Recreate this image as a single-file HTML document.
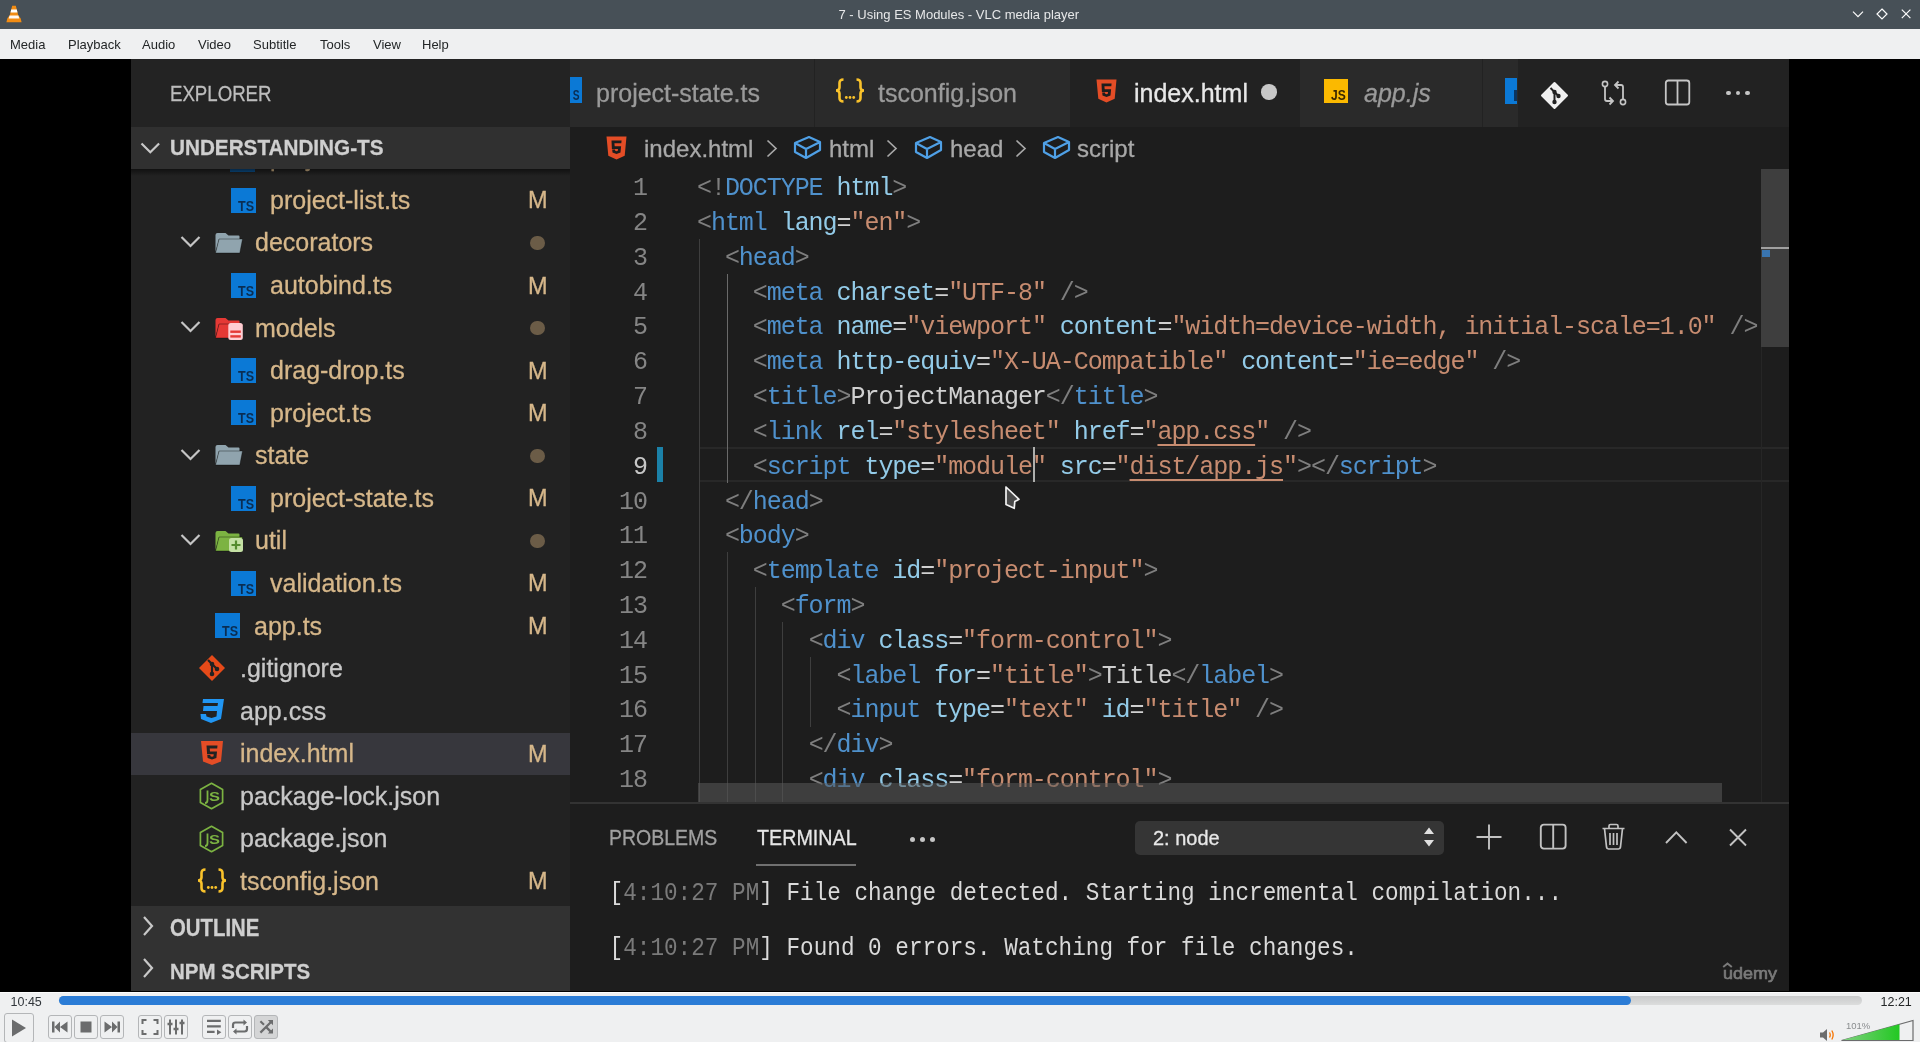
<!DOCTYPE html><html><head><meta charset="utf-8"><style>
html,body{margin:0;padding:0;width:1920px;height:1042px;overflow:hidden;background:#000}
.t{position:absolute;white-space:pre}
#vid .t[style*="Liberation Sans"]{-webkit-text-stroke:0.3px currentColor}
.r{position:absolute}
#root{position:absolute;left:0;top:0;width:1920px;height:1042px;will-change:transform}
</style></head><body><div id="root"><div class="r" style="left:0px;top:0px;width:1920px;height:29px;background:#475057;"></div>
<svg class="r" style="left:5px;top:5px" width="18" height="18" viewBox="0 0 18 18"><path d="M7.2 0.8 L10.8 0.8 L13.2 10 L15.6 13.2 L16.6 17.2 L1.4 17.2 L2.4 13.2 L4.8 10 Z" fill="#f28c13"/>
<path d="M6.2 4.6 L11.8 4.6 L12.5 7.6 L5.5 7.6 Z" fill="#fff"/>
<path d="M4.6 10.4 L13.4 10.4 L14.3 13.4 L3.7 13.4 Z" fill="#fff" opacity="0.95"/></svg>
<div class="t" style="left:838.50px;top:6.29px;font-size:13px;line-height:18px;color:#e6e7e8;font-family:'Liberation Sans', sans-serif;">7 - Using ES Modules - VLC media player</div>
<svg class="r" style="left:1850px;top:6px" width="16" height="16" viewBox="0 0 16 16"><path d="M3 5.6 L8 10.6 L13 5.6" stroke="#fcfcfc" stroke-width="1.2" fill="none"/></svg>
<svg class="r" style="left:1874px;top:6px" width="16" height="16" viewBox="0 0 16 16"><path d="M8 3 L13 8 L8 13 L3 8 Z" stroke="#fcfcfc" stroke-width="1.2" fill="none"/></svg>
<svg class="r" style="left:1898px;top:6px" width="16" height="16" viewBox="0 0 16 16"><path d="M3.8 3.6 L12.4 12.2 M12.4 3.6 L3.8 12.2" stroke="#fcfcfc" stroke-width="1.2" fill="none"/></svg>
<div class="r" style="left:0px;top:29px;width:1920px;height:30px;background:#eff0f1;"></div>
<div class="t" style="left:10.00px;top:36.09px;font-size:13px;line-height:18px;color:#232627;font-family:'Liberation Sans', sans-serif;">Media</div>
<div class="t" style="left:68.00px;top:36.09px;font-size:13px;line-height:18px;color:#232627;font-family:'Liberation Sans', sans-serif;">Playback</div>
<div class="t" style="left:142.00px;top:36.09px;font-size:13px;line-height:18px;color:#232627;font-family:'Liberation Sans', sans-serif;">Audio</div>
<div class="t" style="left:198.00px;top:36.09px;font-size:13px;line-height:18px;color:#232627;font-family:'Liberation Sans', sans-serif;">Video</div>
<div class="t" style="left:253.00px;top:36.09px;font-size:13px;line-height:18px;color:#232627;font-family:'Liberation Sans', sans-serif;">Subtitle</div>
<div class="t" style="left:320.00px;top:36.09px;font-size:13px;line-height:18px;color:#232627;font-family:'Liberation Sans', sans-serif;">Tools</div>
<div class="t" style="left:373.00px;top:36.09px;font-size:13px;line-height:18px;color:#232627;font-family:'Liberation Sans', sans-serif;">View</div>
<div class="t" style="left:422.00px;top:36.09px;font-size:13px;line-height:18px;color:#232627;font-family:'Liberation Sans', sans-serif;">Help</div>
<div class="r" style="left:0px;top:59px;width:1920px;height:933px;background:#000;"></div>
<div id="vid" style="position:absolute;left:0;top:0;width:1920px;height:1042px">
<div class="r" style="left:131px;top:59px;width:439px;height:932px;background:#222222;"></div>
<div class="r" style="left:131px;top:59px;width:439px;height:68px;background:#232323;"></div>
<div class="t" style="left:170.30px;top:77.61px;font-size:21.88px;line-height:31px;color:#bdbdbd;font-family:'Liberation Sans', sans-serif;;transform:scaleX(0.8519);transform-origin:0 0">EXPLORER</div>
<div class="r" style="left:230px;top:169px;width:25px;height:3px;background:#0b4f8a;"></div>
<div class="t" style="left:270.00px;top:140.37px;font-size:25px;line-height:35px;color:#d6b78a;font-family:'Liberation Sans', sans-serif;">project-item.ts</div>
<div class="r" style="left:131px;top:127px;width:439px;height:42px;background:#303030;"></div>
<svg class="r" style="left:139px;top:140px" width="23" height="16" viewBox="0 0 23 16"><path d="M2.5 3.5 L11.3 12.3 L20.1 3.5" stroke="#c8c8c8" stroke-width="2.2" fill="none"/></svg>
<div class="t" style="left:170.30px;top:133.46px;font-size:21.74px;line-height:30px;color:#cfcfcf;font-family:'Liberation Sans', sans-serif;font-weight:bold;;transform:scaleX(0.9523);transform-origin:0 0">UNDERSTANDING-TS</div>
<div class="r" style="left:131px;top:169px;width:439px;height:7px;background:linear-gradient(rgba(0,0,0,0.5),rgba(0,0,0,0))"></div>
<div class="r" style="left:131px;top:733px;width:439px;height:42px;background:#37373d;"></div>
<svg class="r" style="left:230.5px;top:188px" width="25" height="25" viewBox="0 0 25 25"><rect x="0" y="0" width="25" height="25" fill="#0b79d6"/><text x="7" y="22.6" textLength="16" lengthAdjust="spacingAndGlyphs" font-family="Liberation Sans" font-weight="bold" font-size="14" fill="#0a2d52">TS</text></svg>
<div class="t" style="left:270.00px;top:182.93px;font-size:25px;line-height:35px;color:#d6b78a;font-family:'Liberation Sans', sans-serif;">project-list.ts</div>
<div class="t" style="left:528.00px;top:184.45px;font-size:23.5px;line-height:33px;color:#d6b78a;font-family:'Liberation Sans', sans-serif;">M</div>
<svg class="r" style="left:180px;top:234px" width="22" height="16" viewBox="0 0 22 16"><path d="M1.5 3 L10.5 12 L19.5 3" stroke="#c5c5c5" stroke-width="2.2" fill="none"/></svg>
<svg class="r" style="left:214.5px;top:232px" width="29" height="24" viewBox="0 0 29 24"><path d="M0.5 3 Q0.5 1 2.5 1 H10.5 L13.5 3.5 H23.5 Q24.5 3.5 24.5 4.5 V7 H4 L0.5 20 Z" fill="#90a4ae"/><path d="M4 7 H27.5 L24.8 21 H0.5 Z" fill="#90a4ae" stroke="rgba(0,0,0,0.45)" stroke-width="0.8"/></svg>
<div class="t" style="left:255.00px;top:225.49px;font-size:25px;line-height:35px;color:#d6b78a;font-family:'Liberation Sans', sans-serif;">decorators</div>
<div class="r" style="left:530px;top:235.7px;width:14.5px;height:14.5px;border-radius:50%;background:#6b5c47"></div>
<svg class="r" style="left:230.5px;top:273px" width="25" height="25" viewBox="0 0 25 25"><rect x="0" y="0" width="25" height="25" fill="#0b79d6"/><text x="7" y="22.6" textLength="16" lengthAdjust="spacingAndGlyphs" font-family="Liberation Sans" font-weight="bold" font-size="14" fill="#0a2d52">TS</text></svg>
<div class="t" style="left:270.00px;top:268.05px;font-size:25px;line-height:35px;color:#d6b78a;font-family:'Liberation Sans', sans-serif;">autobind.ts</div>
<div class="t" style="left:528.00px;top:269.57px;font-size:23.5px;line-height:33px;color:#d6b78a;font-family:'Liberation Sans', sans-serif;">M</div>
<svg class="r" style="left:180px;top:319px" width="22" height="16" viewBox="0 0 22 16"><path d="M1.5 3 L10.5 12 L19.5 3" stroke="#c5c5c5" stroke-width="2.2" fill="none"/></svg>
<svg class="r" style="left:214.5px;top:317px" width="29" height="24" viewBox="0 0 29 24"><path d="M0.5 3 Q0.5 1 2.5 1 H10.5 L13.5 3.5 H23.5 Q24.5 3.5 24.5 4.5 V7 H4 L0.5 20 Z" fill="#e53935"/><path d="M4 7 H27.5 L24.8 21 H0.5 Z" fill="#e53935" stroke="rgba(0,0,0,0.45)" stroke-width="0.8"/><rect x="13.3" y="6" width="14.5" height="17" rx="2.5" fill="#ffcdd2"/><rect x="15.3" y="13.5" width="10.5" height="2.4" fill="#e53935"/><rect x="15.3" y="18.2" width="10.5" height="2.4" fill="#e53935"/></svg>
<div class="t" style="left:255.00px;top:310.61px;font-size:25px;line-height:35px;color:#d6b78a;font-family:'Liberation Sans', sans-serif;">models</div>
<div class="r" style="left:530px;top:320.8px;width:14.5px;height:14.5px;border-radius:50%;background:#6b5c47"></div>
<svg class="r" style="left:230.5px;top:358px" width="25" height="25" viewBox="0 0 25 25"><rect x="0" y="0" width="25" height="25" fill="#0b79d6"/><text x="7" y="22.6" textLength="16" lengthAdjust="spacingAndGlyphs" font-family="Liberation Sans" font-weight="bold" font-size="14" fill="#0a2d52">TS</text></svg>
<div class="t" style="left:270.00px;top:353.17px;font-size:25px;line-height:35px;color:#d6b78a;font-family:'Liberation Sans', sans-serif;">drag-drop.ts</div>
<div class="t" style="left:528.00px;top:354.69px;font-size:23.5px;line-height:33px;color:#d6b78a;font-family:'Liberation Sans', sans-serif;">M</div>
<svg class="r" style="left:230.5px;top:400px" width="25" height="25" viewBox="0 0 25 25"><rect x="0" y="0" width="25" height="25" fill="#0b79d6"/><text x="7" y="22.6" textLength="16" lengthAdjust="spacingAndGlyphs" font-family="Liberation Sans" font-weight="bold" font-size="14" fill="#0a2d52">TS</text></svg>
<div class="t" style="left:270.00px;top:395.73px;font-size:25px;line-height:35px;color:#d6b78a;font-family:'Liberation Sans', sans-serif;">project.ts</div>
<div class="t" style="left:528.00px;top:397.25px;font-size:23.5px;line-height:33px;color:#d6b78a;font-family:'Liberation Sans', sans-serif;">M</div>
<svg class="r" style="left:180px;top:447px" width="22" height="16" viewBox="0 0 22 16"><path d="M1.5 3 L10.5 12 L19.5 3" stroke="#c5c5c5" stroke-width="2.2" fill="none"/></svg>
<svg class="r" style="left:214.5px;top:444px" width="29" height="24" viewBox="0 0 29 24"><path d="M0.5 3 Q0.5 1 2.5 1 H10.5 L13.5 3.5 H23.5 Q24.5 3.5 24.5 4.5 V7 H4 L0.5 20 Z" fill="#90a4ae"/><path d="M4 7 H27.5 L24.8 21 H0.5 Z" fill="#90a4ae" stroke="rgba(0,0,0,0.45)" stroke-width="0.8"/></svg>
<div class="t" style="left:255.00px;top:438.29px;font-size:25px;line-height:35px;color:#d6b78a;font-family:'Liberation Sans', sans-serif;">state</div>
<div class="r" style="left:530px;top:448.5px;width:14.5px;height:14.5px;border-radius:50%;background:#6b5c47"></div>
<svg class="r" style="left:230.5px;top:486px" width="25" height="25" viewBox="0 0 25 25"><rect x="0" y="0" width="25" height="25" fill="#0b79d6"/><text x="7" y="22.6" textLength="16" lengthAdjust="spacingAndGlyphs" font-family="Liberation Sans" font-weight="bold" font-size="14" fill="#0a2d52">TS</text></svg>
<div class="t" style="left:270.00px;top:480.85px;font-size:25px;line-height:35px;color:#d6b78a;font-family:'Liberation Sans', sans-serif;">project-state.ts</div>
<div class="t" style="left:528.00px;top:482.37px;font-size:23.5px;line-height:33px;color:#d6b78a;font-family:'Liberation Sans', sans-serif;">M</div>
<svg class="r" style="left:180px;top:532px" width="22" height="16" viewBox="0 0 22 16"><path d="M1.5 3 L10.5 12 L19.5 3" stroke="#c5c5c5" stroke-width="2.2" fill="none"/></svg>
<svg class="r" style="left:214.5px;top:530px" width="29" height="24" viewBox="0 0 29 24"><path d="M0.5 3 Q0.5 1 2.5 1 H10.5 L13.5 3.5 H23.5 Q24.5 3.5 24.5 4.5 V7 H4 L0.5 20 Z" fill="#7cb342"/><path d="M4 7 H27.5 L24.8 21 H0.5 Z" fill="#7cb342" stroke="rgba(0,0,0,0.45)" stroke-width="0.8"/><rect x="14" y="8" width="14" height="14" rx="2.5" fill="#c5e1a5"/><path d="M21 10.5 V19.5 M16.5 15 H25.5" stroke="#558b2f" stroke-width="2.2"/></svg>
<div class="t" style="left:255.00px;top:523.41px;font-size:25px;line-height:35px;color:#d6b78a;font-family:'Liberation Sans', sans-serif;">util</div>
<div class="r" style="left:530px;top:533.6px;width:14.5px;height:14.5px;border-radius:50%;background:#6b5c47"></div>
<svg class="r" style="left:230.5px;top:571px" width="25" height="25" viewBox="0 0 25 25"><rect x="0" y="0" width="25" height="25" fill="#0b79d6"/><text x="7" y="22.6" textLength="16" lengthAdjust="spacingAndGlyphs" font-family="Liberation Sans" font-weight="bold" font-size="14" fill="#0a2d52">TS</text></svg>
<div class="t" style="left:270.00px;top:565.97px;font-size:25px;line-height:35px;color:#d6b78a;font-family:'Liberation Sans', sans-serif;">validation.ts</div>
<div class="t" style="left:528.00px;top:567.49px;font-size:23.5px;line-height:33px;color:#d6b78a;font-family:'Liberation Sans', sans-serif;">M</div>
<svg class="r" style="left:214.5px;top:613px" width="25" height="25" viewBox="0 0 25 25"><rect x="0" y="0" width="25" height="25" fill="#0b79d6"/><text x="7" y="22.6" textLength="16" lengthAdjust="spacingAndGlyphs" font-family="Liberation Sans" font-weight="bold" font-size="14" fill="#0a2d52">TS</text></svg>
<div class="t" style="left:254.00px;top:608.53px;font-size:25px;line-height:35px;color:#d6b78a;font-family:'Liberation Sans', sans-serif;">app.ts</div>
<div class="t" style="left:528.00px;top:610.05px;font-size:23.5px;line-height:33px;color:#d6b78a;font-family:'Liberation Sans', sans-serif;">M</div>
<svg class="r" style="left:198px;top:654px" width="28" height="28" viewBox="0 0 28 28"><path d="M14 1 L27 14 L14 27 L1 14 Z" fill="#e64a19"/><path d="M10 6 L19 15 M14 10 L14 20" stroke="#222" stroke-width="2.2"/><circle cx="14" cy="10" r="2.3" fill="#222"/><circle cx="14" cy="20" r="2.3" fill="#222"/><circle cx="19" cy="15" r="2.3" fill="#222"/></svg>
<div class="t" style="left:240.00px;top:651.09px;font-size:25px;line-height:35px;color:#c8c8c8;font-family:'Liberation Sans', sans-serif;">.gitignore</div>
<svg class="r" style="left:198px;top:697px" width="28" height="28" viewBox="0 0 28 28"><path d="M5 2 H26 L23 22 L13 26 L3 22 L2.5 17 H8 L8.5 19.5 L13.5 21 L18.5 19.5 L19 14 H5 L5.5 9 H19.5 L20 6 H4.5 Z" fill="#2196f3"/></svg>
<div class="t" style="left:240.00px;top:693.65px;font-size:25px;line-height:35px;color:#c8c8c8;font-family:'Liberation Sans', sans-serif;">app.css</div>
<svg class="r" style="left:200px;top:740px" width="24" height="26" viewBox="0 0 24 26"><path d="M1 1 H23 L21 21.5 L12 25 L3 21.5 Z" fill="#e44d26"/><path d="M6.5 5.5 H17.5 L17.2 8.5 H9.7 L10 11.5 H17 L16.4 18 L12 19.5 L7.6 18 L7.3 15 H10.3 L10.5 16.2 L12 16.7 L13.5 16.2 L13.7 14.3 H7.1 Z" fill="#222"/></svg>
<div class="t" style="left:240.00px;top:736.21px;font-size:25px;line-height:35px;color:#d6b78a;font-family:'Liberation Sans', sans-serif;">index.html</div>
<div class="t" style="left:528.00px;top:737.73px;font-size:23.5px;line-height:33px;color:#d6b78a;font-family:'Liberation Sans', sans-serif;">M</div>
<svg class="r" style="left:198px;top:782px" width="27" height="28" viewBox="0 0 27 28"><path d="M13.5 1.3 L24.6 7.6 V20.4 L13.5 26.7 L2.4 20.4 V7.6 Z" stroke="#7cb342" stroke-width="1.7" fill="none" stroke-linejoin="round"/><path d="M9.5 8.5 V18 Q9.5 21 7 21" stroke="#7cb342" stroke-width="1.8" fill="none"/><text x="11" y="18.5" textLength="11" lengthAdjust="spacingAndGlyphs" font-family="Liberation Sans" font-weight="bold" font-size="13" fill="#7cb342">S</text></svg>
<div class="t" style="left:240.00px;top:778.77px;font-size:25px;line-height:35px;color:#c8c8c8;font-family:'Liberation Sans', sans-serif;">package-lock.json</div>
<svg class="r" style="left:198px;top:825px" width="27" height="28" viewBox="0 0 27 28"><path d="M13.5 1.3 L24.6 7.6 V20.4 L13.5 26.7 L2.4 20.4 V7.6 Z" stroke="#7cb342" stroke-width="1.7" fill="none" stroke-linejoin="round"/><path d="M9.5 8.5 V18 Q9.5 21 7 21" stroke="#7cb342" stroke-width="1.8" fill="none"/><text x="11" y="18.5" textLength="11" lengthAdjust="spacingAndGlyphs" font-family="Liberation Sans" font-weight="bold" font-size="13" fill="#7cb342">S</text></svg>
<div class="t" style="left:240.00px;top:821.33px;font-size:25px;line-height:35px;color:#c8c8c8;font-family:'Liberation Sans', sans-serif;">package.json</div>
<svg class="r" style="left:196px;top:868px" width="32" height="25" viewBox="0 0 32 25"><path d="M9.5 1.5 Q5.5 1.5 5.5 5 V9.5 Q5.5 12.5 2 12.5 Q5.5 12.5 5.5 15.5 V20 Q5.5 23.5 9.5 23.5 M22.5 1.5 Q26.5 1.5 26.5 5 V9.5 Q26.5 12.5 30 12.5 Q26.5 12.5 26.5 15.5 V20 Q26.5 23.5 22.5 23.5" stroke="#f9c22b" stroke-width="2.6" fill="none"/><circle cx="12.3" cy="19.5" r="1.4" fill="#f9c22b"/><circle cx="16" cy="19.5" r="1.4" fill="#f9c22b"/><circle cx="19.7" cy="19.5" r="1.4" fill="#f9c22b"/></svg>
<div class="t" style="left:240.00px;top:863.89px;font-size:25px;line-height:35px;color:#d6b78a;font-family:'Liberation Sans', sans-serif;">tsconfig.json</div>
<div class="t" style="left:528.00px;top:865.41px;font-size:23.5px;line-height:33px;color:#d6b78a;font-family:'Liberation Sans', sans-serif;">M</div>
<div class="r" style="left:131px;top:906px;width:439px;height:85px;background:#323232;"></div>
<svg class="r" style="left:141px;top:913px" width="14" height="30" viewBox="0 0 14 30"><path d="M3 4 L11 13 L3 22" stroke="#c8c8c8" stroke-width="2.2" fill="none"/></svg>
<div class="t" style="left:169.75px;top:911.59px;font-size:23.55px;line-height:33px;color:#cfcfcf;font-family:'Liberation Sans', sans-serif;font-weight:bold;;transform:scaleX(0.8642);transform-origin:0 0">OUTLINE</div>
<svg class="r" style="left:141px;top:955px" width="14" height="30" viewBox="0 0 14 30"><path d="M3 4 L11 13 L3 22" stroke="#c8c8c8" stroke-width="2.2" fill="none"/></svg>
<div class="t" style="left:170.00px;top:954.83px;font-size:22.83px;line-height:32px;color:#cfcfcf;font-family:'Liberation Sans', sans-serif;font-weight:bold;;transform:scaleX(0.8980);transform-origin:0 0">NPM SCRIPTS</div>
<div class="r" style="left:570px;top:59px;width:1219px;height:932px;background:#1d1d1d;"></div>
<div class="r" style="left:570px;top:59px;width:1219px;height:68px;background:#222222;"></div>
<div class="r" style="left:570px;top:59px;width:244px;height:68px;background:#2a2a2a;"></div>
<div class="r" style="left:815px;top:59px;width:255px;height:68px;background:#2a2a2a;"></div>
<div class="r" style="left:1300px;top:59px;width:182px;height:68px;background:#2a2a2a;"></div>
<div class="r" style="left:1483px;top:59px;width:35px;height:68px;background:#2a2a2a;"></div>
<svg class="r" style="left:570px;top:77px" width="12" height="26" viewBox="0 0 12 26"><rect x="0" y="0" width="12" height="26" fill="#0b79d6"/><text x="2.8" y="22.8" textLength="6.8" lengthAdjust="spacingAndGlyphs" font-family="Liberation Sans" font-weight="bold" font-size="14" fill="#0a2d52">S</text></svg>
<div class="t" style="left:596.00px;top:75.83px;font-size:25px;line-height:35px;color:#9a9a9a;font-family:'Liberation Sans', sans-serif;">project-state.ts</div>
<svg class="r" style="left:834px;top:78px" width="32" height="25" viewBox="0 0 32 25"><path d="M9.5 1.5 Q5.5 1.5 5.5 5 V9.5 Q5.5 12.5 2 12.5 Q5.5 12.5 5.5 15.5 V20 Q5.5 23.5 9.5 23.5 M22.5 1.5 Q26.5 1.5 26.5 5 V9.5 Q26.5 12.5 30 12.5 Q26.5 12.5 26.5 15.5 V20 Q26.5 23.5 22.5 23.5" stroke="#f9c22b" stroke-width="2.6" fill="none"/><circle cx="12.3" cy="19.5" r="1.4" fill="#f9c22b"/><circle cx="16" cy="19.5" r="1.4" fill="#f9c22b"/><circle cx="19.7" cy="19.5" r="1.4" fill="#f9c22b"/></svg>
<div class="t" style="left:878.00px;top:75.83px;font-size:25px;line-height:35px;color:#9a9a9a;font-family:'Liberation Sans', sans-serif;">tsconfig.json</div>
<svg class="r" style="left:1096px;top:79px" width="21" height="24" viewBox="0 0 21 24"><path d="M0.5 0.5 H20.5 L18.7 19.8 L10.5 23.5 L2.3 19.8 Z" fill="#e44d26"/><path d="M5.5 4.5 H15.6 L15.3 7.3 H8.4 L8.7 10.2 H15.1 L14.5 16.6 L10.5 18 L6.5 16.6 L6.2 13.6 H9 L9.2 14.7 L10.5 15.2 L11.8 14.7 L12 12.9 H5.9 Z" fill="#1d1d1d"/></svg>
<div class="t" style="left:1134.00px;top:76.33px;font-size:25px;line-height:35px;color:#e8e8e8;font-family:'Liberation Sans', sans-serif;">index.html</div>
<div class="r" style="left:1261px;top:84px;width:15.5px;height:15.5px;border-radius:50%;background:#c8c8c8"></div>
<svg class="r" style="left:1324px;top:79px" width="24" height="24" viewBox="0 0 24 24"><rect width="24" height="24" fill="#fbb900"/><text x="7" y="21" textLength="14.8" lengthAdjust="spacingAndGlyphs" font-family="Liberation Sans" font-weight="bold" font-size="15" fill="#3a2800">JS</text></svg>
<div class="t" style="left:1364.00px;top:75.83px;font-size:25px;line-height:35px;color:#9a9a9a;font-family:'Liberation Sans', sans-serif;font-style:italic">app.js</div>
<div class="r" style="left:1505px;top:78px;width:12px;height:26px;background:#0b79d6;"></div>
<div class="r" style="left:1514px;top:90px;width:3px;height:11px;background:#0b3560;"></div>
<svg class="r" style="left:1540px;top:81px" width="29" height="29" viewBox="0 0 29 29"><path d="M14.5 2 L27 14.5 L14.5 27 L2 14.5 Z" fill="#f0f0f0" stroke="#f0f0f0" stroke-width="2" stroke-linejoin="round"/><path d="M10.5 7 L18.5 15 M14.5 11 L14.5 21" stroke="#222" stroke-width="2"/><circle cx="14.5" cy="11" r="2.2" fill="#222"/><circle cx="14.5" cy="21" r="2.2" fill="#222"/><circle cx="18.5" cy="15" r="2.2" fill="#222"/></svg>
<svg class="r" style="left:1600px;top:78px" width="29" height="30" viewBox="0 0 29 30"><circle cx="5" cy="6" r="2.6" stroke="#c5c5c5" stroke-width="1.6" fill="none"/><path d="M5 8.6 V21 Q5 23 7 23 H12" stroke="#c5c5c5" stroke-width="1.8" fill="none"/><path d="M9.5 19.5 L13 23 L9.5 26.5" stroke="#c5c5c5" stroke-width="1.8" fill="none"/><circle cx="23" cy="24" r="2.6" stroke="#c5c5c5" stroke-width="1.6" fill="none"/><path d="M23 21.4 V9 Q23 7 21 7 H16" stroke="#c5c5c5" stroke-width="1.8" fill="none"/><path d="M18.5 3.5 L15 7 L18.5 10.5" stroke="#c5c5c5" stroke-width="1.8" fill="none"/></svg>
<svg class="r" style="left:1664px;top:79px" width="27" height="27" viewBox="0 0 27 27"><rect x="1.8" y="1.5" width="23.5" height="24" rx="2.5" stroke="#c5c5c5" stroke-width="1.8" fill="none"/><path d="M13.5 1.5 V25.5" stroke="#c5c5c5" stroke-width="1.8"/></svg>
<div class="r" style="left:1726px;top:90.5px;width:4.5px;height:4.5px;border-radius:50%;background:#c5c5c5"></div>
<div class="r" style="left:1735.7px;top:90.5px;width:4.5px;height:4.5px;border-radius:50%;background:#c5c5c5"></div>
<div class="r" style="left:1745.4px;top:90.5px;width:4.5px;height:4.5px;border-radius:50%;background:#c5c5c5"></div>
<svg class="r" style="left:606px;top:136px" width="21" height="24" viewBox="0 0 21 24"><path d="M0.5 0.5 H20.5 L18.7 19.8 L10.5 23.5 L2.3 19.8 Z" fill="#e44d26"/><path d="M5.5 4.5 H15.6 L15.3 7.3 H8.4 L8.7 10.2 H15.1 L14.5 16.6 L10.5 18 L6.5 16.6 L6.2 13.6 H9 L9.2 14.7 L10.5 15.2 L11.8 14.7 L12 12.9 H5.9 Z" fill="#1d1d1d"/></svg>
<div class="t" style="left:644.00px;top:131.98px;font-size:24px;line-height:34px;color:#a8a8a8;font-family:'Liberation Sans', sans-serif;">index.html</div>
<svg class="r" style="left:766px;top:139px" width="12" height="19" viewBox="0 0 12 19"><path d="M1.5 1.5 L10 9.5 L1.5 17.5" stroke="#a8a8a8" stroke-width="1.7" fill="none"/></svg>
<svg class="r" style="left:793px;top:135px" width="29" height="25" viewBox="0 0 29 25"><path d="M2 8 L16 2 L27 7 L27 15 L13 23 L2 17 Z M2 8 L13 14 L27 7 M13 14 L13 23" stroke="#4fa0e6" stroke-width="2.2" fill="none" stroke-linejoin="round"/></svg>
<div class="t" style="left:829.00px;top:131.98px;font-size:24px;line-height:34px;color:#a8a8a8;font-family:'Liberation Sans', sans-serif;">html</div>
<svg class="r" style="left:886px;top:139px" width="12" height="19" viewBox="0 0 12 19"><path d="M1.5 1.5 L10 9.5 L1.5 17.5" stroke="#a8a8a8" stroke-width="1.7" fill="none"/></svg>
<svg class="r" style="left:914px;top:135px" width="29" height="25" viewBox="0 0 29 25"><path d="M2 8 L16 2 L27 7 L27 15 L13 23 L2 17 Z M2 8 L13 14 L27 7 M13 14 L13 23" stroke="#4fa0e6" stroke-width="2.2" fill="none" stroke-linejoin="round"/></svg>
<div class="t" style="left:950.00px;top:131.98px;font-size:24px;line-height:34px;color:#a8a8a8;font-family:'Liberation Sans', sans-serif;">head</div>
<svg class="r" style="left:1015px;top:139px" width="12" height="19" viewBox="0 0 12 19"><path d="M1.5 1.5 L10 9.5 L1.5 17.5" stroke="#a8a8a8" stroke-width="1.7" fill="none"/></svg>
<svg class="r" style="left:1042px;top:135px" width="29" height="25" viewBox="0 0 29 25"><path d="M2 8 L16 2 L27 7 L27 15 L13 23 L2 17 Z M2 8 L13 14 L27 7 M13 14 L13 23" stroke="#4fa0e6" stroke-width="2.2" fill="none" stroke-linejoin="round"/></svg>
<div class="t" style="left:1077.00px;top:131.98px;font-size:24px;line-height:34px;color:#a8a8a8;font-family:'Liberation Sans', sans-serif;">script</div>
<div class="r" style="left:699px;top:447px;width:1090px;height:35px;background:transparent;border-top:2px solid #282828;border-bottom:2px solid #282828;box-sizing:border-box"></div>
<div class="r" style="left:699px;top:239px;width:1px;height:613px;background:#3e3e3e;"></div>
<div class="r" style="left:727px;top:274px;width:1px;height:209px;background:#6a6a6a;"></div>
<div class="r" style="left:727px;top:552px;width:1px;height:299px;background:#3e3e3e;"></div>
<div class="r" style="left:755px;top:587px;width:1px;height:265px;background:#3e3e3e;"></div>
<div class="r" style="left:782px;top:622px;width:1px;height:230px;background:#3e3e3e;"></div>
<div class="r" style="left:810px;top:657px;width:1px;height:70px;background:#3e3e3e;"></div>
<div class="t" style="left:560px;width:87px;text-align:right;top:172.15px;font-size:25px;letter-spacing:-1.0500000000000007px;line-height:34.8px;color:#858585;font-family:'Liberation Mono', monospace">1</div>
<div class="t" style="left:697px;top:172.15px;font-size:25px;letter-spacing:-1.0500000000000007px;line-height:34.8px;font-family:'Liberation Mono', monospace"><span style="color:#7e7e7e">&lt;!</span><span style="color:#4f91cc">DOCTYPE</span><span style="color:#d0d0d0"> </span><span style="color:#93cbe8">html</span><span style="color:#7e7e7e">&gt;</span></div>
<div class="t" style="left:560px;width:87px;text-align:right;top:206.97px;font-size:25px;letter-spacing:-1.0500000000000007px;line-height:34.8px;color:#858585;font-family:'Liberation Mono', monospace">2</div>
<div class="t" style="left:697px;top:206.97px;font-size:25px;letter-spacing:-1.0500000000000007px;line-height:34.8px;font-family:'Liberation Mono', monospace"><span style="color:#d0d0d0"></span><span style="color:#7e7e7e">&lt;</span><span style="color:#4f91cc">html</span><span style="color:#d0d0d0"> </span><span style="color:#93cbe8">lang</span><span style="color:#d0d0d0">=</span><span style="color:#c78c70">&quot;</span><span style="color:#c78c70">en</span><span style="color:#c78c70">&quot;</span><span style="color:#7e7e7e">&gt;</span></div>
<div class="t" style="left:560px;width:87px;text-align:right;top:241.79px;font-size:25px;letter-spacing:-1.0500000000000007px;line-height:34.8px;color:#858585;font-family:'Liberation Mono', monospace">3</div>
<div class="t" style="left:697px;top:241.79px;font-size:25px;letter-spacing:-1.0500000000000007px;line-height:34.8px;font-family:'Liberation Mono', monospace"><span style="color:#d0d0d0">  </span><span style="color:#7e7e7e">&lt;</span><span style="color:#4f91cc">head</span><span style="color:#7e7e7e">&gt;</span></div>
<div class="t" style="left:560px;width:87px;text-align:right;top:276.61px;font-size:25px;letter-spacing:-1.0500000000000007px;line-height:34.8px;color:#858585;font-family:'Liberation Mono', monospace">4</div>
<div class="t" style="left:697px;top:276.61px;font-size:25px;letter-spacing:-1.0500000000000007px;line-height:34.8px;font-family:'Liberation Mono', monospace"><span style="color:#d0d0d0">    </span><span style="color:#7e7e7e">&lt;</span><span style="color:#4f91cc">meta</span><span style="color:#d0d0d0"> </span><span style="color:#93cbe8">charset</span><span style="color:#d0d0d0">=</span><span style="color:#c78c70">&quot;</span><span style="color:#c78c70">UTF-8</span><span style="color:#c78c70">&quot;</span><span style="color:#7e7e7e"> /&gt;</span></div>
<div class="t" style="left:560px;width:87px;text-align:right;top:311.43px;font-size:25px;letter-spacing:-1.0500000000000007px;line-height:34.8px;color:#858585;font-family:'Liberation Mono', monospace">5</div>
<div class="t" style="left:697px;top:311.43px;font-size:25px;letter-spacing:-1.0500000000000007px;line-height:34.8px;font-family:'Liberation Mono', monospace"><span style="color:#d0d0d0">    </span><span style="color:#7e7e7e">&lt;</span><span style="color:#4f91cc">meta</span><span style="color:#d0d0d0"> </span><span style="color:#93cbe8">name</span><span style="color:#d0d0d0">=</span><span style="color:#c78c70">&quot;</span><span style="color:#c78c70">viewport</span><span style="color:#c78c70">&quot;</span><span style="color:#d0d0d0"> </span><span style="color:#93cbe8">content</span><span style="color:#d0d0d0">=</span><span style="color:#c78c70">&quot;</span><span style="color:#c78c70">width=device-width, initial-scale=1.0</span><span style="color:#c78c70">&quot;</span><span style="color:#7e7e7e"> /&gt;</span></div>
<div class="t" style="left:560px;width:87px;text-align:right;top:346.25px;font-size:25px;letter-spacing:-1.0500000000000007px;line-height:34.8px;color:#858585;font-family:'Liberation Mono', monospace">6</div>
<div class="t" style="left:697px;top:346.25px;font-size:25px;letter-spacing:-1.0500000000000007px;line-height:34.8px;font-family:'Liberation Mono', monospace"><span style="color:#d0d0d0">    </span><span style="color:#7e7e7e">&lt;</span><span style="color:#4f91cc">meta</span><span style="color:#d0d0d0"> </span><span style="color:#93cbe8">http-equiv</span><span style="color:#d0d0d0">=</span><span style="color:#c78c70">&quot;</span><span style="color:#c78c70">X-UA-Compatible</span><span style="color:#c78c70">&quot;</span><span style="color:#d0d0d0"> </span><span style="color:#93cbe8">content</span><span style="color:#d0d0d0">=</span><span style="color:#c78c70">&quot;</span><span style="color:#c78c70">ie=edge</span><span style="color:#c78c70">&quot;</span><span style="color:#7e7e7e"> /&gt;</span></div>
<div class="t" style="left:560px;width:87px;text-align:right;top:381.07px;font-size:25px;letter-spacing:-1.0500000000000007px;line-height:34.8px;color:#858585;font-family:'Liberation Mono', monospace">7</div>
<div class="t" style="left:697px;top:381.07px;font-size:25px;letter-spacing:-1.0500000000000007px;line-height:34.8px;font-family:'Liberation Mono', monospace"><span style="color:#d0d0d0">    </span><span style="color:#7e7e7e">&lt;</span><span style="color:#4f91cc">title</span><span style="color:#7e7e7e">&gt;</span><span style="color:#d0d0d0">ProjectManager</span><span style="color:#7e7e7e">&lt;/</span><span style="color:#4f91cc">title</span><span style="color:#7e7e7e">&gt;</span></div>
<div class="t" style="left:560px;width:87px;text-align:right;top:415.89px;font-size:25px;letter-spacing:-1.0500000000000007px;line-height:34.8px;color:#858585;font-family:'Liberation Mono', monospace">8</div>
<div class="t" style="left:697px;top:415.89px;font-size:25px;letter-spacing:-1.0500000000000007px;line-height:34.8px;font-family:'Liberation Mono', monospace"><span style="color:#d0d0d0">    </span><span style="color:#7e7e7e">&lt;</span><span style="color:#4f91cc">link</span><span style="color:#d0d0d0"> </span><span style="color:#93cbe8">rel</span><span style="color:#d0d0d0">=</span><span style="color:#c78c70">&quot;</span><span style="color:#c78c70">stylesheet</span><span style="color:#c78c70">&quot;</span><span style="color:#d0d0d0"> </span><span style="color:#93cbe8">href</span><span style="color:#d0d0d0">=</span><span style="color:#c78c70">&quot;</span><span style="color:#c78c70;text-decoration:underline;text-underline-offset:5px;text-decoration-thickness:2px">app.css</span><span style="color:#c78c70">&quot;</span><span style="color:#7e7e7e"> /&gt;</span></div>
<div class="t" style="left:560px;width:87px;text-align:right;top:450.71px;font-size:25px;letter-spacing:-1.0500000000000007px;line-height:34.8px;color:#c6c6c6;font-family:'Liberation Mono', monospace">9</div>
<div class="t" style="left:697px;top:450.71px;font-size:25px;letter-spacing:-1.0500000000000007px;line-height:34.8px;font-family:'Liberation Mono', monospace"><span style="color:#d0d0d0">    </span><span style="color:#7e7e7e">&lt;</span><span style="color:#4f91cc">script</span><span style="color:#d0d0d0"> </span><span style="color:#93cbe8">type</span><span style="color:#d0d0d0">=</span><span style="color:#c78c70">&quot;</span><span style="color:#c78c70">module</span><span style="color:#c78c70">&quot;</span><span style="color:#d0d0d0"> </span><span style="color:#93cbe8">src</span><span style="color:#d0d0d0">=</span><span style="color:#c78c70">&quot;</span><span style="color:#c78c70;text-decoration:underline;text-underline-offset:5px;text-decoration-thickness:2px">dist/app.js</span><span style="color:#c78c70">&quot;</span><span style="color:#7e7e7e">&gt;</span><span style="color:#7e7e7e">&lt;/</span><span style="color:#4f91cc">script</span><span style="color:#7e7e7e">&gt;</span></div>
<div class="t" style="left:560px;width:87px;text-align:right;top:485.53px;font-size:25px;letter-spacing:-1.0500000000000007px;line-height:34.8px;color:#858585;font-family:'Liberation Mono', monospace">10</div>
<div class="t" style="left:697px;top:485.53px;font-size:25px;letter-spacing:-1.0500000000000007px;line-height:34.8px;font-family:'Liberation Mono', monospace"><span style="color:#d0d0d0">  </span><span style="color:#7e7e7e">&lt;/</span><span style="color:#4f91cc">head</span><span style="color:#7e7e7e">&gt;</span></div>
<div class="t" style="left:560px;width:87px;text-align:right;top:520.35px;font-size:25px;letter-spacing:-1.0500000000000007px;line-height:34.8px;color:#858585;font-family:'Liberation Mono', monospace">11</div>
<div class="t" style="left:697px;top:520.35px;font-size:25px;letter-spacing:-1.0500000000000007px;line-height:34.8px;font-family:'Liberation Mono', monospace"><span style="color:#d0d0d0">  </span><span style="color:#7e7e7e">&lt;</span><span style="color:#4f91cc">body</span><span style="color:#7e7e7e">&gt;</span></div>
<div class="t" style="left:560px;width:87px;text-align:right;top:555.17px;font-size:25px;letter-spacing:-1.0500000000000007px;line-height:34.8px;color:#858585;font-family:'Liberation Mono', monospace">12</div>
<div class="t" style="left:697px;top:555.17px;font-size:25px;letter-spacing:-1.0500000000000007px;line-height:34.8px;font-family:'Liberation Mono', monospace"><span style="color:#d0d0d0">    </span><span style="color:#7e7e7e">&lt;</span><span style="color:#4f91cc">template</span><span style="color:#d0d0d0"> </span><span style="color:#93cbe8">id</span><span style="color:#d0d0d0">=</span><span style="color:#c78c70">&quot;</span><span style="color:#c78c70">project-input</span><span style="color:#c78c70">&quot;</span><span style="color:#7e7e7e">&gt;</span></div>
<div class="t" style="left:560px;width:87px;text-align:right;top:589.99px;font-size:25px;letter-spacing:-1.0500000000000007px;line-height:34.8px;color:#858585;font-family:'Liberation Mono', monospace">13</div>
<div class="t" style="left:697px;top:589.99px;font-size:25px;letter-spacing:-1.0500000000000007px;line-height:34.8px;font-family:'Liberation Mono', monospace"><span style="color:#d0d0d0">      </span><span style="color:#7e7e7e">&lt;</span><span style="color:#4f91cc">form</span><span style="color:#7e7e7e">&gt;</span></div>
<div class="t" style="left:560px;width:87px;text-align:right;top:624.81px;font-size:25px;letter-spacing:-1.0500000000000007px;line-height:34.8px;color:#858585;font-family:'Liberation Mono', monospace">14</div>
<div class="t" style="left:697px;top:624.81px;font-size:25px;letter-spacing:-1.0500000000000007px;line-height:34.8px;font-family:'Liberation Mono', monospace"><span style="color:#d0d0d0">        </span><span style="color:#7e7e7e">&lt;</span><span style="color:#4f91cc">div</span><span style="color:#d0d0d0"> </span><span style="color:#93cbe8">class</span><span style="color:#d0d0d0">=</span><span style="color:#c78c70">&quot;</span><span style="color:#c78c70">form-control</span><span style="color:#c78c70">&quot;</span><span style="color:#7e7e7e">&gt;</span></div>
<div class="t" style="left:560px;width:87px;text-align:right;top:659.63px;font-size:25px;letter-spacing:-1.0500000000000007px;line-height:34.8px;color:#858585;font-family:'Liberation Mono', monospace">15</div>
<div class="t" style="left:697px;top:659.63px;font-size:25px;letter-spacing:-1.0500000000000007px;line-height:34.8px;font-family:'Liberation Mono', monospace"><span style="color:#d0d0d0">          </span><span style="color:#7e7e7e">&lt;</span><span style="color:#4f91cc">label</span><span style="color:#d0d0d0"> </span><span style="color:#93cbe8">for</span><span style="color:#d0d0d0">=</span><span style="color:#c78c70">&quot;</span><span style="color:#c78c70">title</span><span style="color:#c78c70">&quot;</span><span style="color:#7e7e7e">&gt;</span><span style="color:#d0d0d0">Title</span><span style="color:#7e7e7e">&lt;/</span><span style="color:#4f91cc">label</span><span style="color:#7e7e7e">&gt;</span></div>
<div class="t" style="left:560px;width:87px;text-align:right;top:694.45px;font-size:25px;letter-spacing:-1.0500000000000007px;line-height:34.8px;color:#858585;font-family:'Liberation Mono', monospace">16</div>
<div class="t" style="left:697px;top:694.45px;font-size:25px;letter-spacing:-1.0500000000000007px;line-height:34.8px;font-family:'Liberation Mono', monospace"><span style="color:#d0d0d0">          </span><span style="color:#7e7e7e">&lt;</span><span style="color:#4f91cc">input</span><span style="color:#d0d0d0"> </span><span style="color:#93cbe8">type</span><span style="color:#d0d0d0">=</span><span style="color:#c78c70">&quot;</span><span style="color:#c78c70">text</span><span style="color:#c78c70">&quot;</span><span style="color:#d0d0d0"> </span><span style="color:#93cbe8">id</span><span style="color:#d0d0d0">=</span><span style="color:#c78c70">&quot;</span><span style="color:#c78c70">title</span><span style="color:#c78c70">&quot;</span><span style="color:#7e7e7e"> /&gt;</span></div>
<div class="t" style="left:560px;width:87px;text-align:right;top:729.27px;font-size:25px;letter-spacing:-1.0500000000000007px;line-height:34.8px;color:#858585;font-family:'Liberation Mono', monospace">17</div>
<div class="t" style="left:697px;top:729.27px;font-size:25px;letter-spacing:-1.0500000000000007px;line-height:34.8px;font-family:'Liberation Mono', monospace"><span style="color:#d0d0d0">        </span><span style="color:#7e7e7e">&lt;/</span><span style="color:#4f91cc">div</span><span style="color:#7e7e7e">&gt;</span></div>
<div class="t" style="left:560px;width:87px;text-align:right;top:764.09px;font-size:25px;letter-spacing:-1.0500000000000007px;line-height:34.8px;color:#858585;font-family:'Liberation Mono', monospace">18</div>
<div class="t" style="left:697px;top:764.09px;font-size:25px;letter-spacing:-1.0500000000000007px;line-height:34.8px;font-family:'Liberation Mono', monospace"><span style="color:#d0d0d0">        </span><span style="color:#7e7e7e">&lt;</span><span style="color:#4f91cc">div</span><span style="color:#d0d0d0"> </span><span style="color:#93cbe8">class</span><span style="color:#d0d0d0">=</span><span style="color:#c78c70">&quot;</span><span style="color:#c78c70">form-control</span><span style="color:#c78c70">&quot;</span><span style="color:#7e7e7e">&gt;</span></div>
<div class="r" style="left:657px;top:447px;width:6px;height:35px;background:#1b81a8;"></div>
<div class="r" style="left:1033px;top:447px;width:2px;height:35px;background:#aeafad;"></div>
<svg class="r" style="left:1003px;top:484px" width="20" height="28" viewBox="0 0 20 28"><path d="M3 3 V20.5 L11.2 24.3 L11.8 17.6 L16 15.3 Z" fill="#4a4a4a" stroke="#f2f2f2" stroke-width="1.7" stroke-linejoin="round"/></svg>
<div class="r" style="left:698px;top:783px;width:1024px;height:19px;background:rgba(90,90,90,0.55);"></div>
<div class="r" style="left:1761px;top:169px;width:1px;height:633px;background:#262626;"></div>
<div class="r" style="left:1761px;top:169px;width:28px;height:178px;background:#3e3e3e;"></div>
<div class="r" style="left:1761px;top:247px;width:28px;height:2px;background:#a0a0a0;"></div>
<div class="r" style="left:1762px;top:250px;width:8px;height:7px;background:#3a75b0;"></div>
<div class="r" style="left:570px;top:802px;width:1219px;height:189px;background:#1d1d1d;"></div>
<div class="r" style="left:570px;top:802px;width:1219px;height:2px;background:#333333;"></div>
<div class="t" style="left:608.75px;top:822.16px;font-size:22.61px;line-height:32px;color:#a0a0a0;font-family:'Liberation Sans', sans-serif;;transform:scaleX(0.8619);transform-origin:0 0">PROBLEMS</div>
<div class="t" style="left:756.50px;top:822.16px;font-size:22.61px;line-height:32px;color:#e6e6e6;font-family:'Liberation Sans', sans-serif;;transform:scaleX(0.8719);transform-origin:0 0">TERMINAL</div>
<div class="r" style="left:756px;top:863.5px;width:100px;height:2px;background:#707070;"></div>
<div class="r" style="left:910px;top:837px;width:5px;height:5px;border-radius:50%;background:#c5c5c5"></div>
<div class="r" style="left:920px;top:837px;width:5px;height:5px;border-radius:50%;background:#c5c5c5"></div>
<div class="r" style="left:930px;top:837px;width:5px;height:5px;border-radius:50%;background:#c5c5c5"></div>
<div class="r" style="left:1135px;top:821px;width:309px;height:34px;border-radius:5px;background:#353535"></div>
<div class="t" style="left:1152.50px;top:823.23px;font-size:20.96px;line-height:29px;color:#e8e8e8;font-family:'Liberation Sans', sans-serif;;transform:scaleX(0.9528);transform-origin:0 0">2: node</div>
<svg class="r" style="left:1423px;top:827px" width="12" height="20" viewBox="0 0 12 20"><path d="M6 0.5 L11 7 H1 Z M6 19.5 L11 13 H1 Z" fill="#e0e0e0"/></svg>
<svg class="r" style="left:1475px;top:823px" width="28" height="28" viewBox="0 0 28 28"><path d="M14 1.5 V26.5 M1.5 14 H26.5" stroke="#c2c2c2" stroke-width="1.9"/></svg>
<svg class="r" style="left:1539px;top:823px" width="29" height="27" viewBox="0 0 29 27"><rect x="1.8" y="1.6" width="24.8" height="24" rx="3" stroke="#c2c2c2" stroke-width="1.9" fill="none"/><path d="M14.2 1.6 V25.6" stroke="#c2c2c2" stroke-width="1.9"/></svg>
<svg class="r" style="left:1601px;top:822px" width="25" height="29" viewBox="0 0 25 29"><path d="M1.5 6.5 H23.5 M8 6.5 V4 Q8 2.5 9.5 2.5 H15.5 Q17 2.5 17 4 V6.5 M3.5 6.5 L5.5 25 Q5.8 27 7.5 27 H17.5 Q19.2 27 19.5 25 L21.5 6.5 M9 11 V23 M12.5 11 V23 M16 11 V23" stroke="#c2c2c2" stroke-width="1.7" fill="none"/></svg>
<svg class="r" style="left:1663px;top:829px" width="27" height="17" viewBox="0 0 27 17"><path d="M3 14 L13.3 3.3 L23.6 14" stroke="#c2c2c2" stroke-width="1.9" fill="none"/></svg>
<svg class="r" style="left:1728px;top:828px" width="20" height="19" viewBox="0 0 20 19"><path d="M2 1.5 L18 17.5 M18 1.5 L2 17.5" stroke="#c2c2c2" stroke-width="1.9" fill="none"/></svg>
<div class="t" style="left:609.6px;top:877.06px;font-size:22.683px;line-height:34.8px;font-family:'Liberation Mono', monospace;color:#dadada;transform:scaleY(1.12);transform-origin:0 23.44px">[<span style="color:#7a7a7a">4:10:27 PM</span>] File change detected. Starting incremental compilation...</div>
<div class="t" style="left:609.6px;top:931.56px;font-size:22.683px;line-height:34.8px;font-family:'Liberation Mono', monospace;color:#dadada;transform:scaleY(1.12);transform-origin:0 23.44px">[<span style="color:#7a7a7a">4:10:27 PM</span>] Found 0 errors. Watching for file changes.</div>
<div class="t" style="left:1723.00px;top:960.75px;font-size:17.17px;line-height:24px;color:#7a7a7a;font-family:'Liberation Sans', sans-serif;-webkit-text-stroke:0.7px currentColor;transform:scaleX(1.0484);transform-origin:0 0">udemy</div>
<svg class="r" style="left:1722px;top:962px" width="11" height="6" viewBox="0 0 11 6"><path d="M1.2 5 L5.5 1.5 L9.8 5" stroke="#7a7a7a" stroke-width="2" fill="none"/></svg>
</div>
<div class="r" style="left:0px;top:992px;width:1920px;height:50px;background:#eff0f1;"></div>
<div class="r" style="left:0px;top:992px;width:1920px;height:1px;background:#fcfcfc;"></div>
<div class="t" style="left:10.50px;top:992.67px;font-size:12.5px;line-height:18px;color:#31363b;font-family:'Liberation Sans', sans-serif;">10:45</div>
<div class="r" style="left:59px;top:996px;width:1803px;height:9px;background:#d3d4d5;border-radius:4.5px;background:linear-gradient(#c9cacb,#dcdddd)"></div>
<div class="r" style="left:59px;top:996px;width:1572px;height:9px;background:#2b7cd6;border-radius:4.5px"></div>
<div class="t" style="left:1880.50px;top:992.67px;font-size:12.5px;line-height:18px;color:#232627;font-family:'Liberation Sans', sans-serif;">12:21</div>
<div class="r" style="left:4px;top:1013px;width:30px;height:30px;box-sizing:border-box;border:1px solid #b4b6b8;border-radius:3px;background:#eff0f1"></div>
<svg class="r" style="left:4px;top:1013px" width="30" height="30" viewBox="0 0 30 30"><path d="M8 6.5 L22 15 L8 23.5 Z" fill="#6b6c6d"/></svg>
<div class="r" style="left:48px;top:1015px;width:24px;height:24px;box-sizing:border-box;border:1px solid #b4b6b8;border-radius:3px;background:#eff0f1"></div>
<svg class="r" style="left:48px;top:1015px" width="24" height="24" viewBox="0 0 24 24"><path d="M4 6.5 H6.5 V17.5 H4 Z M12 12 L19.5 6.5 V17.5 Z M6.5 12 L12 6.5 V17.5 Z" fill="#6b6c6d"/></svg>
<div class="r" style="left:74px;top:1015px;width:24px;height:24px;box-sizing:border-box;border:1px solid #b4b6b8;border-radius:3px;background:#eff0f1"></div>
<svg class="r" style="left:74px;top:1015px" width="24" height="24" viewBox="0 0 24 24"><rect x="6.5" y="6.5" width="11" height="11" fill="#6b6c6d"/></svg>
<div class="r" style="left:100px;top:1015px;width:24px;height:24px;box-sizing:border-box;border:1px solid #b4b6b8;border-radius:3px;background:#eff0f1"></div>
<svg class="r" style="left:100px;top:1015px" width="24" height="24" viewBox="0 0 24 24"><path d="M20 6.5 H17.5 V17.5 H20 Z M12 12 L4.5 6.5 V17.5 Z M17.5 12 L12 6.5 V17.5 Z" fill="#6b6c6d"/></svg>
<div class="r" style="left:138px;top:1015px;width:24px;height:24px;box-sizing:border-box;border:1px solid #b4b6b8;border-radius:3px;background:#eff0f1"></div>
<svg class="r" style="left:138px;top:1015px" width="24" height="24" viewBox="0 0 24 24"><path d="M4.5 9 V5 H8.5 M15.5 5 H19.5 V9 M19.5 15 V19 H15.5 M8.5 19 H4.5 V15" stroke="#6b6c6d" stroke-width="2" fill="none"/></svg>
<div class="r" style="left:164px;top:1015px;width:24px;height:24px;box-sizing:border-box;border:1px solid #b4b6b8;border-radius:3px;background:#eff0f1"></div>
<svg class="r" style="left:164px;top:1015px" width="24" height="24" viewBox="0 0 24 24"><path d="M6 4.5 V19.5 M12 4.5 V19.5 M18 4.5 V19.5" stroke="#6b6c6d" stroke-width="2"/><path d="M3.5 9 H8.5 M9.5 14 H14.5 M15.5 8 H20.5" stroke="#6b6c6d" stroke-width="2.5"/></svg>
<div class="r" style="left:202px;top:1015px;width:24px;height:24px;box-sizing:border-box;border:1px solid #b4b6b8;border-radius:3px;background:#eff0f1"></div>
<svg class="r" style="left:202px;top:1015px" width="24" height="24" viewBox="0 0 24 24"><path d="M5 5.8 H18.8 M5 11.3 H18.8 M5 16.8 H12.6" stroke="#6b6c6d" stroke-width="2.2"/><path d="M15 14.6 L19.4 17.3 L15 20 Z" fill="#6b6c6d"/></svg>
<div class="r" style="left:228px;top:1015px;width:24px;height:24px;box-sizing:border-box;border:1px solid #b4b6b8;border-radius:3px;background:#eff0f1"></div>
<svg class="r" style="left:228px;top:1015px" width="24" height="24" viewBox="0 0 24 24"><path d="M5 13 V10 Q5 7.5 7.5 7.5 H17 M19 11 V14 Q19 16.5 16.5 16.5 H7" stroke="#6b6c6d" stroke-width="2.2" fill="none"/><path d="M15.5 4.5 L19 7.5 L15.5 10.5 Z M8.5 13.5 L5 16.5 L8.5 19.5 Z" fill="#6b6c6d"/></svg>
<div class="r" style="left:254px;top:1015px;width:24px;height:24px;box-sizing:border-box;border:1px solid #b4b6b8;border-radius:3px;background:#d4d5d6"></div>
<svg class="r" style="left:254px;top:1015px" width="24" height="24" viewBox="0 0 24 24"><path d="M6.4 6.3 L10 9.7 M6.4 17.6 L17 7 M12.7 12.6 L16.5 16.4" stroke="#6b6c6d" stroke-width="2.2" fill="none"/><path d="M13.8 5 H19 V10.2 Z M13.8 18.6 H19 V13.4 Z" fill="#6b6c6d"/></svg>
<svg class="r" style="left:1819px;top:1028px" width="16" height="14" viewBox="0 0 16 14"><path d="M1 4.5 H4 L8 1 V13 L4 9.5 H1 Z" fill="#6b6c6d"/><path d="M10.5 4.5 Q12 7 10.5 9.5 M12.8 2.5 Q15.5 7 12.8 11.5" stroke="#f67400" stroke-width="1.3" fill="none"/></svg>
<div class="t" style="left:1846.00px;top:1018.61px;font-size:9.5px;line-height:13px;color:#8a8d8f;font-family:'Liberation Sans', sans-serif;">101%</div>
<svg class="r" style="left:1840px;top:1019px" width="75" height="23" viewBox="0 0 75 23"><defs><linearGradient id="vg" x1="0" x2="1"><stop offset="0" stop-color="#7fd07f"/><stop offset="1" stop-color="#22c822"/></linearGradient></defs><path d="M1.5 21.5 L73 1.5 L73 21.5 Z" fill="#eff0f1" stroke="#6b6c6d" stroke-width="1.2"/><path d="M2.5 21 L59.5 5.3 L59.5 21 Z" fill="url(#vg)"/></svg>
</div></body></html>
